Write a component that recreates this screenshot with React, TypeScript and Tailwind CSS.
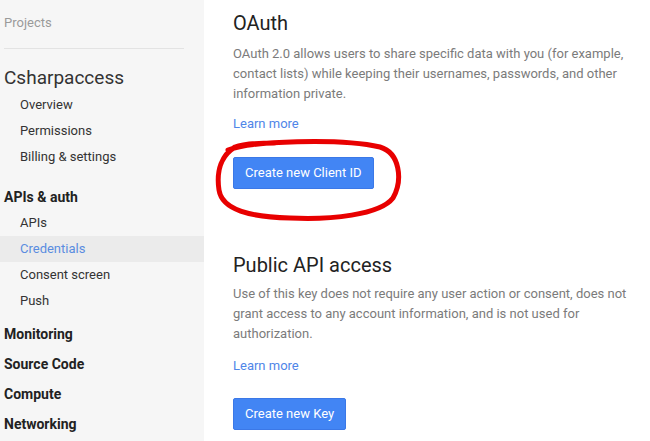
import React from 'react';

// --- Sidebar data ---
const projectLinks = ['Overview', 'Permissions', 'Billing & settings'];
const apiLinks = ['APIs', 'Credentials', 'Consent screen', 'Push'];
const sections = ['Monitoring', 'Source Code', 'Compute', 'Networking'];

const font = { fontFamily: 'Roboto, "Liberation Sans", sans-serif' };

const Sidebar: React.FC = () => (
  <aside className="w-[204px] shrink-0 bg-[#f6f6f6] flex flex-col pt-[1px]">
    <div className="h-[44px] flex items-center pl-1 text-[13px] text-[#9a9a9a]">Projects</div>
    <div className="mt-[3px] ml-1 w-[180px] border-t border-[#e3e3e3]" />
    <div className="mt-[15px] h-[28px] flex items-center pl-1 text-[19px] text-[#333]">Csharpaccess</div>
    {projectLinks.map((label) => (
      <div key={label} className="h-[26px] flex items-center pl-5 text-[13px] text-[#333]">
        {label}
      </div>
    ))}
    <div className="mt-[14px] h-[26px] flex items-center pl-1 text-[14px] font-bold text-[#222]">APIs &amp; auth</div>
    {apiLinks.map((label) => (
      <div
        key={label}
        className={`h-[26px] flex items-center pl-5 text-[13px] ${
          label === 'Credentials' ? 'bg-[#ebebeb] text-[#5a8de0]' : 'text-[#333]'
        }`}
      >
        {label}
      </div>
    ))}
    <div className="mt-[5px]" />
    {sections.map((label) => (
      <div key={label} className="h-[30px] flex items-center pl-1 text-[14px] font-bold text-[#222]">
        {label}
      </div>
    ))}
  </aside>
);

type SectionProps = {
  title: string;
  body: string;
  button: string;
  bodyGap: string;
  linkGap: string;
  buttonGap: string;
};

const Section: React.FC<SectionProps> = ({ title, body, button, bodyGap, linkGap, buttonGap }) => (
  <section className="flex flex-col">
    <h2 className="text-[20px] leading-[26px] text-[#222]">{title}</h2>
    <p className={`${bodyGap} w-[410px] text-[13px] leading-[20px] text-[#7b7b7b]`}>{body}</p>
    <a className={`${linkGap} text-[13px] leading-[20px] text-[#4f86e8]`}>Learn more</a>
    <div className={buttonGap}>
      <button className="h-[32px] px-[11px] rounded-[2px] bg-[#4285f4] border border-[#3b78e7] text-white text-[13px]">
        {button}
      </button>
    </div>
  </section>
);

// Hand-drawn red loop around the first button
const RedLoop: React.FC = () => (
  <svg className="absolute left-0 top-0 pointer-events-none" width="650" height="441">
    <path
      d="M 228 150 C 250 141, 340 138, 380 147 C 400 153, 403 180, 393 198 C 380 215, 330 220, 290 218 C 250 217, 222 210, 219 190 C 216 170, 222 155, 235 147 C 245 143, 262 143, 275 143"
      fill="none"
      stroke="#e80000"
      strokeWidth="5"
      strokeLinecap="round"
    />
  </svg>
);

const App: React.FC = () => (
  <div className="relative w-[650px] h-[441px] overflow-hidden bg-white flex" style={font}>
    <Sidebar />
    <main className="flex-1 pl-[29px] pt-[10px] flex flex-col">
      <Section
        title="OAuth"
        bodyGap="mt-[8px]"
        linkGap="mt-[10px]"
        buttonGap="mt-[23px]"
        body="OAuth 2.0 allows users to share specific data with you (for example, contact lists) while keeping their usernames, passwords, and other information private."
        button="Create new Client ID"
      />
      <div className="mt-[63px]">
        <Section
          title="Public API access"
          bodyGap="mt-[6px]"
          linkGap="mt-[12px]"
          buttonGap="mt-[22px]"
          body="Use of this key does not require any user action or consent, does not grant access to any account information, and is not used for authorization."
          button="Create new Key"
        />
      </div>
    </main>
    <RedLoop />
  </div>
);

export default App;
